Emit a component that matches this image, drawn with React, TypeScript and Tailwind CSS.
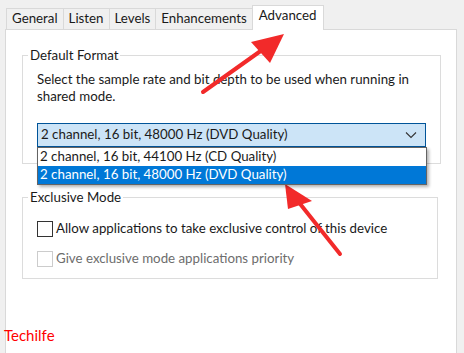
import React from "react";

const tabs = ["General", "Listen", "Levels", "Enhancements"];

function Arrows() {
  return (
    <svg className="absolute inset-0 pointer-events-none" width="464" height="353" viewBox="0 0 464 353">
      <line x1="203" y1="92" x2="262" y2="50" stroke="#f22a2a" strokeWidth="4" strokeLinecap="round" />
      <polygon points="284,34 251,42 270,63" fill="#f22a2a" />
      <line x1="340" y1="254" x2="297" y2="200" stroke="#f22a2a" strokeWidth="4" strokeLinecap="round" />
      <polygon points="285,184 288,209 312,201" fill="#f22a2a" />
    </svg>
  );
}

export default function App() {
  return (
    <div
      className="relative w-[464px] h-[353px] overflow-hidden bg-[#f0f0f0] text-[13.3px] text-[#1a1a1a]"
      style={{ fontFamily: 'Lato, "Open Sans", sans-serif' }}
    >
      <div className="flex items-end pl-[6px] pt-[5px] h-[29px]">
        {tabs.map((t) => (
          <div
            key={t}
            className="h-[21px] px-[5px] flex items-center border border-b-0 border-[#d9d9d9] -ml-px first:ml-0 leading-none bg-[#f0f0f0] whitespace-nowrap"
          >
            {t}
          </div>
        ))}
        <div className="h-[25px] px-[6px] pb-[4px] flex items-center bg-white border border-b-0 border-[#d9d9d9] -ml-px relative z-10 -mb-px leading-none">
          Advanced
        </div>
      </div>

      <div className="ml-[5px] w-[452px] h-[330px] bg-white border border-[#d9d9d9] pl-[16px] pt-[19px]">
        <fieldset className="w-[416px] h-[115px] border border-[#dcdcdc] px-[14px] pt-[4px] relative">
          <legend className="ml-[-9px] px-[2px] leading-none">Default Format</legend>
          <p className="leading-[17px] mt-[5px]">
            Select the sample rate and bit depth to be used when running in shared mode.
          </p>
          <div className="relative mt-[18px] w-[389px]">
            <div className="h-[24px] bg-[#cce4f7] border border-[#005499] flex items-center justify-between pl-[3px] pr-[8px]">
              <span>2 channel, 16 bit, 48000 Hz (DVD Quality)</span>
              <svg width="12" height="8" viewBox="0 0 12 8">
                <path d="M1 1.5 L6 6.5 L11 1.5" fill="none" stroke="#333" strokeWidth="1.1" />
              </svg>
            </div>
            <div className="absolute left-0 top-[24px] w-[390px] bg-white border border-[#646464] shadow-[2px_2px_3px_rgba(0,0,0,0.3)] z-20">
              <div className="h-[18px] flex items-center pl-[2px]">2 channel, 16 bit, 44100 Hz (CD Quality)</div>
              <div className="h-[18px] flex items-center pl-[2px] bg-[#0078d7] text-white">2 channel, 16 bit, 48000 Hz (DVD Quality)</div>
            </div>
          </div>
        </fieldset>

        <fieldset className="mt-[27px] w-[416px] h-[88px] border border-[#dcdcdc] px-[14px]">
          <legend className="ml-[-9px] px-[2px] leading-none">Exclusive Mode</legend>
          <label className="flex items-center gap-[3px] mt-[17px] h-[16px] whitespace-nowrap">
            <span className="w-[16px] h-[16px] border border-[#333] bg-white" />
            <span>Allow applications to take exclusive control of this device</span>
          </label>
          <label className="flex items-center gap-[3px] mt-[14px] h-[16px] text-[#6d6d6d] whitespace-nowrap">
            <span className="w-[16px] h-[16px] border border-[#cccccc] bg-white" />
            <span>Give exclusive mode applications priority</span>
          </label>
        </fieldset>
      </div>

      <div className="absolute left-[4px] top-[328px] text-[15px] text-[#ff0000] leading-none">Techilfe</div>
      <Arrows />
    </div>
  );
}
